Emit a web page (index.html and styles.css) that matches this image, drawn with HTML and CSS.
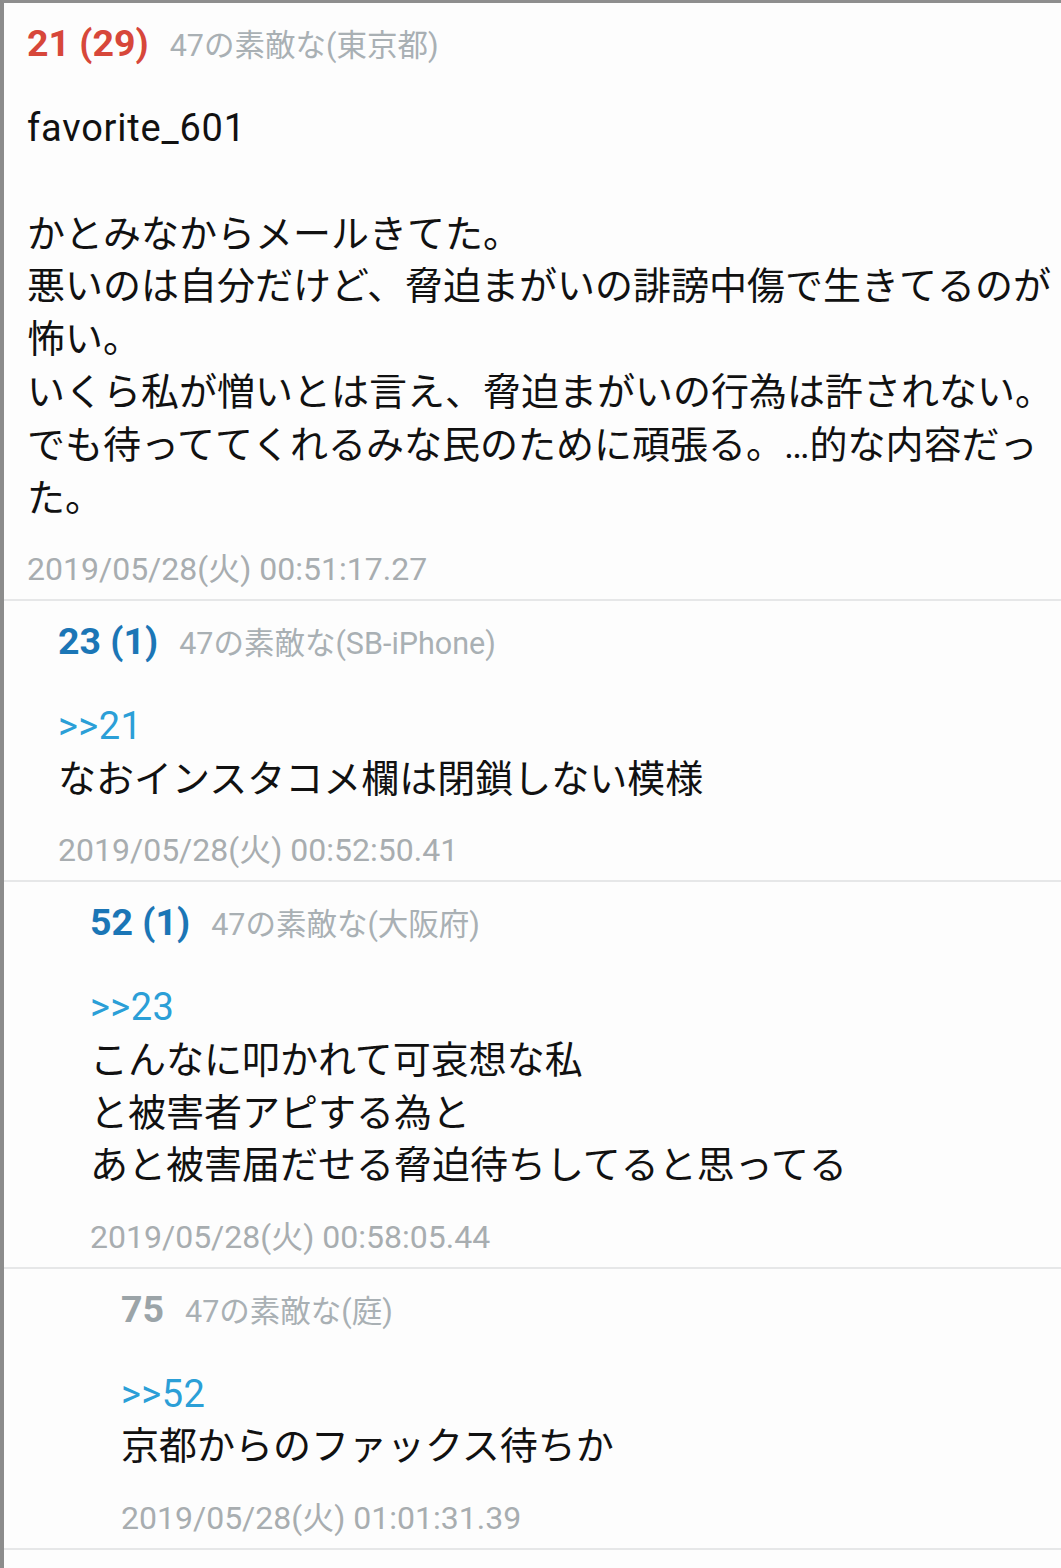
FILE: index.html
```html
<!DOCTYPE html>
<html lang="ja">
<head>
<meta charset="utf-8">
<title>thread</title>
<link rel="stylesheet" href="styles.css">
</head>
<body>
<div class="page">
  <article class="post depth-0">
    <header class="post-head">
      <span class="num num-red">21 (29)</span>
      <span class="meta">47の素敵な(東京都)</span>
    </header>
    <div class="post-body"><span class="latin">favorite_601</span><br><br>かとみなからメールきてた。<br>悪いのは自分だけど、脅迫まがいの誹謗中傷で生きてるのが怖い。<br>いくら私が憎いとは言え、脅迫まがいの行為は許されない。<br>でも待っててくれるみな民のために頑張る。…的な内容だった。</div>
    <div class="stamp">2019/05/28(火) 00:51:17.27</div>
  </article>
  <article class="post depth-1">
    <header class="post-head">
      <span class="num num-blue">23 (1)</span>
      <span class="meta">47の素敵な(SB-iPhone)</span>
    </header>
    <div class="post-body"><span class="anchor">&gt;&gt;21</span><br>なおインスタコメ欄は閉鎖しない模様</div>
    <div class="stamp">2019/05/28(火) 00:52:50.41</div>
  </article>
  <article class="post depth-2">
    <header class="post-head">
      <span class="num num-blue">52 (1)</span>
      <span class="meta">47の素敵な(大阪府)</span>
    </header>
    <div class="post-body"><span class="anchor">&gt;&gt;23</span><br>こんなに叩かれて可哀想な私<br>と被害者アピする為と<br>あと被害届だせる脅迫待ちしてると思ってる</div>
    <div class="stamp">2019/05/28(火) 00:58:05.44</div>
  </article>
  <article class="post depth-3">
    <header class="post-head">
      <span class="num num-gray">75</span>
      <span class="meta">47の素敵な(庭)</span>
    </header>
    <div class="post-body"><span class="anchor">&gt;&gt;52</span><br>京都からのファックス待ちか</div>
    <div class="stamp">2019/05/28(火) 01:01:31.39</div>
  </article>
</div>
</body>
</html>
```

FILE: styles.css
```css
html, body {
  margin: 0;
  padding: 0;
  background: #fdfdfd;
}

body {
  font-family: Roboto, "Noto Sans CJK JP", sans-serif;
  color: #111111;
}

.page {
  min-height: 1568px;
  box-sizing: border-box;
  border-top: 3px solid #8e8e8e;
  border-left: 4px solid #8c8c8c;
  background: #fdfdfd;
}

.post {
  padding-top: 19px;
  padding-bottom: 10px;
  padding-right: 6px;
  border-bottom: 2px solid #e6e7e8;
}

.depth-0 { padding-left: 23px; }
.depth-1 { padding-left: 54px; }
.depth-2 { padding-left: 86px; }
.depth-3 { padding-left: 117px; }

.post-head {
  display: flex;
  align-items: baseline;
  height: 42px;
  line-height: 42px;
  white-space: nowrap;
}

.num {
  font-size: 37.5px;
  font-weight: 700;
  margin-right: 21px;
}

.num-red { color: #d7473a; }
.num-blue { color: #1b76b6; }
.num-gray { color: #9ba4a8; }

.meta {
  font-size: 30.5px;
  color: #a9b0b4;
}

.post-body {
  margin-top: 38px;
  font-size: 38px;
  line-height: 52.8px;
  color: #111111;
}

.latin {
  letter-spacing: 0.8px;
}

.anchor {
  color: #2b9fd7;
  letter-spacing: 0.5px;
}

.stamp {
  margin-top: 24.5px;
  font-size: 32px;
  line-height: 40px;
  color: #a8adb0;
}
```
